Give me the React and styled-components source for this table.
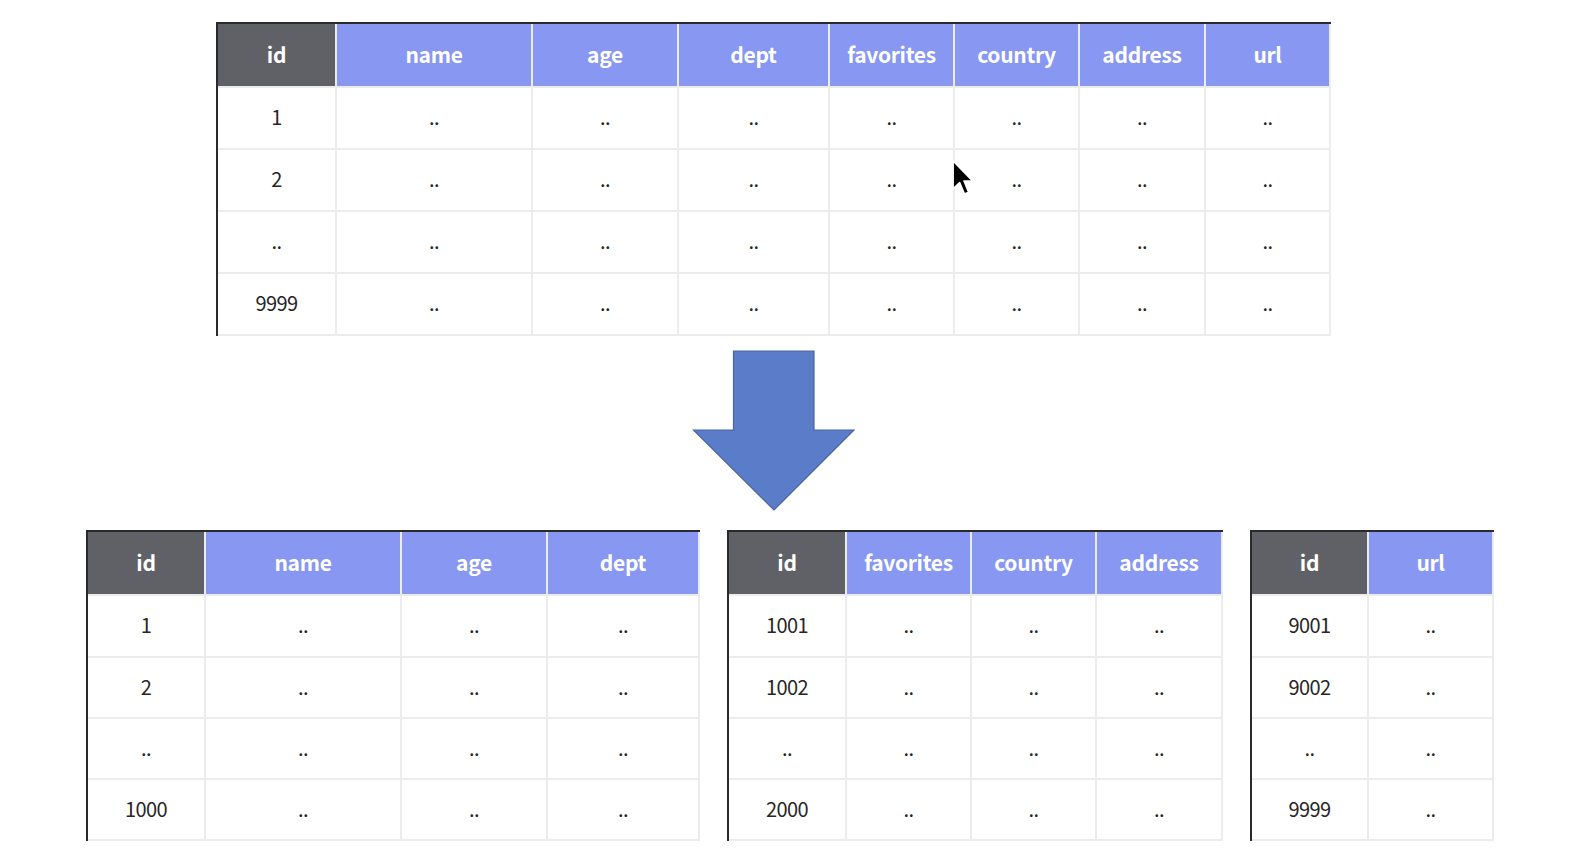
import React from "react";
import styled, { createGlobalStyle } from "styled-components";

const Global = createGlobalStyle`
  html, body { margin: 0; padding: 0; background: #ffffff; }
  body { font-family: "Noto Sans CJK KR", "Noto Sans", sans-serif; }
`;

const Page = styled.div`
  position: relative;
  width: 1580px;
  height: 867px;
  padding-top: 22px;
  box-sizing: border-box;
  overflow: hidden;
  display: flex;
  flex-direction: column;
`;

const TopRow = styled.div`
  display: flex;
  padding-left: 216px;
`;

const ArrowRow = styled.div`
  display: flex;
  padding-left: 692px;
  margin-top: 14px;
  height: 162px;
`;

const BottomRow = styled.div`
  display: flex;
  gap: 27px;
  padding-left: 86px;
  margin-top: 18px;
`;

const Grid = styled.div`
  display: grid;
  grid-template-columns: ${(p) => p.$cols};
  grid-template-rows: ${(p) => p.$rows};
  gap: 2px;
  background: #ececec;
  border-left: 2px solid #2a2a2c;
  border-top: 2px solid #2a2a2c;
  padding: 0 2px 2px 0;
`;

const HeadCell = styled.div`
  display: flex;
  align-items: center;
  justify-content: center;
  background: ${(p) => (p.$key ? "#5f6166" : "#8797f2")};
  color: #ffffff;
  font-weight: 700;
  font-size: 21px;
  line-height: 1;
  letter-spacing: -0.3px;
  padding-bottom: 2px;
`;

const Cell = styled.div`
  display: flex;
  align-items: center;
  justify-content: center;
  background: #ffffff;
  color: #262626;
  font-size: 20px;
  line-height: 1;
  letter-spacing: -0.6px;
  padding-bottom: 2px;
`;

const Cursor = styled.svg`
  position: absolute;
  left: 952px;
  top: 160px;
`;

function Table({ widths, headers, ids, rows }) {
  const cols = widths.map((w) => `${w}px`).join(" ");
  return (
    <Grid $cols={cols} $rows={rows}>
      {headers.map((h, i) => (
        <HeadCell key={h} $key={i === 0}>
          {h}
        </HeadCell>
      ))}
      {ids.map((id, r) =>
        headers.map((h, c) => (
          <Cell key={`${r}-${h}`}>{c === 0 ? id : ".."}</Cell>
        ))
      )}
    </Grid>
  );
}

function Arrow() {
  return (
    <svg width="164" height="162" viewBox="0 0 164 162">
      <polygon
        points="41.5,1 122,1 122,80 162,80 82,160 1.5,80 41.5,80"
        fill="#5b7cc8"
        stroke="#48679f"
        strokeWidth="1.2"
        strokeLinejoin="miter"
      />
    </svg>
  );
}

const TOP_ROWS = "62px repeat(4, 60px)";
const BOTTOM_ROWS = "62px 60px 59px 59px 59px";

export default function App() {
  return (
    <>
      <Global />
      <Page>
        <TopRow>
          <Table
            widths={[117, 194, 144, 149, 123, 123, 124, 123]}
            headers={["id", "name", "age", "dept", "favorites", "country", "address", "url"]}
            ids={["1", "2", "..", "9999"]}
            rows={TOP_ROWS}
          />
        </TopRow>
        <ArrowRow>
          <Arrow />
        </ArrowRow>
        <BottomRow>
          <Table
            widths={[116, 194, 144, 150]}
            headers={["id", "name", "age", "dept"]}
            ids={["1", "2", "..", "1000"]}
            rows={BOTTOM_ROWS}
          />
          <Table
            widths={[116, 123, 123, 124]}
            headers={["id", "favorites", "country", "address"]}
            ids={["1001", "1002", "..", "2000"]}
            rows={BOTTOM_ROWS}
          />
          <Table
            widths={[115, 123]}
            headers={["id", "url"]}
            ids={["9001", "9002", "..", "9999"]}
            rows={BOTTOM_ROWS}
          />
        </BottomRow>
        <Cursor width="23" height="36" viewBox="0 0 13 20.5">
          <path
            d="M0.6,0.6 L0.6,16.4 L4.3,12.8 L7,19.3 L9.4,18.3 L6.8,12 L11.8,12 Z"
            fill="#000000"
            stroke="#ffffff"
            strokeWidth="0.9"
            strokeLinejoin="round"
          />
        </Cursor>
      </Page>
    </>
  );
}
